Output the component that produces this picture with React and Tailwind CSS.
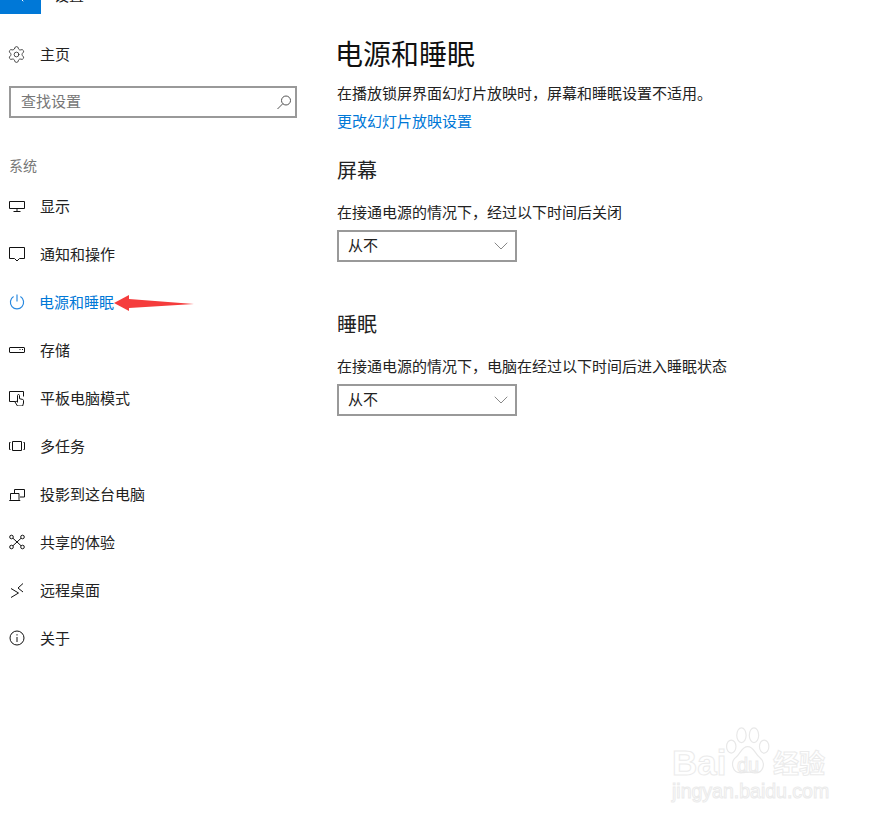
import React from 'react';
import { ChevronLeft, ChevronDown, Settings } from 'lucide-react';

const Icon = ({ children }) => (
  <svg viewBox="0 0 16 16" fill="none" stroke="currentColor" strokeWidth="1" className="w-4 h-4 flex-shrink-0">
    {children}
  </svg>
);

const NAV_ITEMS = [
  {
    label: '显示',
    icon: <path d="M.5 3.500h15v7H.5zM8 10.500V13M4.500 13.500h7" />,
  },
  {
    label: '通知和操作',
    icon: <path d="M.5 1.500h15v11h-5l-2.500 2.500-2.500-2.500h-5z" />,
  },
  {
    label: '电源和睡眠',
    active: true,
    icon: (
      <>
        <path d="M8 .5v7" strokeWidth="1.2" />
        <path d="M4.600 2.600a6.600 6.600 0 1 0 6.800 0" strokeWidth="1.2" />
      </>
    ),
  },
  {
    label: '存储',
    icon: (
      <>
        <rect x=".5" y="5.500" width="15" height="5" rx=".5" />
        <path d="M10.500 7.500h1M13 7.500h1" />
      </>
    ),
  },
  {
    label: '平板电脑模式',
    icon: (
      <>
        <path d="M6 11.500H.5v-10h14v5" />
        <path d="M8.500 16l-2.500-4 1.200-.8 1.300 1V5.500c0-1.300 2-1.300 2 0v3.200l3.300.8c.5.100.7.500.7 1v2.500l-.9 3z" fill="#fff" />
      </>
    ),
  },
  {
    label: '多任务',
    icon: <path d="M3.500 3.500h9v9h-9zM1.500 4.500h-1v7h1M14.500 4.500h1v7h-1" />,
  },
  {
    label: '投影到这台电脑',
    icon: <path d="M5.500 7V3.500h10v7.500H11M.5 14.500l1-1V7.500h8.500v6l1 1z" />,
  },
  {
    label: '共享的体验',
    icon: (
      <>
        <circle cx="2.500" cy="3" r="1.800" />
        <circle cx="13.500" cy="3" r="1.800" />
        <circle cx="2.500" cy="13" r="1.800" />
        <circle cx="13.500" cy="13" r="1.800" />
        <path d="M4 4.300l8 7.400M12 4.300l-8 7.400" />
      </>
    ),
  },
  {
    label: '远程桌面',
    icon: <path d="M2 6.500l7.500 4.500L2 15.500M14 1.500L9 6l5 4" />,
  },
  {
    label: '关于',
    icon: (
      <>
        <circle cx="8" cy="8" r="7" />
        <path d="M8 7v5M8 4.200v1.300" />
      </>
    ),
  },
];

function NavRow({ label, icon, active }) {
  return (
    <div className={`h-12 flex items-center pl-[9px] text-[15px] ${active ? 'text-[#0078d7]' : 'text-[#222]'}`}>
      <span className={active ? 'text-[#2b8ae0]' : 'text-[#111]'}>
        <Icon>{icon}</Icon>
      </span>
      <span className={active ? 'ml-[14px]' : 'ml-[15px]'}>{label}</span>
    </div>
  );
}

function Dropdown() {
  return (
    <div className="mt-[7px] w-[180px] h-8 border-2 border-[#999] flex items-center justify-between pl-[9px] pr-[2px] text-[15px] text-[#222]">
      <span className="-mt-[2px]">从不</span>
      <ChevronDown className="w-6 h-6 text-[#888]" strokeWidth={1} />
    </div>
  );
}

function Watermark() {
  return (
    <div className="absolute left-[672px] top-[726px] w-[160px] h-[85px] select-none whitespace-nowrap">
      <svg viewBox="0 0 60 60" preserveAspectRatio="none" className="absolute left-[53px] top-px w-[47px] h-[49px]" fill="#fff" stroke="#e8e8e8" strokeWidth="1.500">
        <ellipse cx="8" cy="24" rx="6" ry="8" />
        <ellipse cx="21" cy="10" rx="6" ry="9" />
        <ellipse cx="37" cy="10" rx="6" ry="9" />
        <ellipse cx="50" cy="24" rx="6" ry="8" />
        <path d="M29 24c-8 0-9 9-15 13-7 5-6 20 8 19 4 0 10-2 14 0 13 2 17-12 8-19-6-4-7-13-15-13z" />
      </svg>
      <span className="absolute left-0 top-[17px] text-[35px] leading-[40px] font-bold text-white [-webkit-text-stroke:1px_#ebebeb] font-['Liberation_Sans',sans-serif]">Bai</span>
      <span className="absolute left-[65px] top-[27px] text-[20px] leading-[24px] text-white [-webkit-text-stroke:1px_#ebebeb] font-['Liberation_Sans',sans-serif]">du</span>
      <span className="absolute left-[101px] top-[20px] text-[26px] leading-[32px] font-bold text-white [-webkit-text-stroke:1px_#ebebeb]">经验</span>
      <span className="absolute left-0 top-[53px] text-[19.500px] leading-[24px] text-white [-webkit-text-stroke:1px_#ebebeb] font-['Liberation_Sans',sans-serif]">jingyan.baidu.com</span>
    </div>
  );
}

export default function App() {
  return (
    <div className="relative w-[876px] h-[821px] overflow-hidden bg-white font-['Noto_Sans_CJK_SC','Noto_Sans',sans-serif]">
      <div className="h-[14px] flex overflow-hidden">
        <div className="w-[41px] bg-[#0078d7] flex items-end justify-center text-white">
          <ChevronLeft className="w-4 h-4 mb-[9px] flex-shrink-0" strokeWidth={1.500} />
        </div>
        <span className="ml-[13px] -mt-[16px] text-[15px] leading-[22px] text-[#222]">设置</span>
      </div>

      <div className="flex">
        <aside className="w-[337px] flex-shrink-0">
          <div className="mt-4 h-12 flex items-center pl-[7px] text-[15px] text-[#222]">
            <Settings className="w-[19px] h-[19px] flex-shrink-0" strokeWidth={1} />
            <span className="ml-[14px]">主页</span>
          </div>
          <div className="mt-2 ml-[9px] w-[288px] h-8 border-2 border-[#999] flex items-center justify-between pl-[10px] pr-[3px] text-[15px] text-[#777]">
            <span className="-mt-[2px]">查找设置</span>
            <svg viewBox="0 0 16 16" fill="none" stroke="#555" strokeWidth="1" className="w-4 h-4 flex-shrink-0">
              <circle cx="10" cy="6.500" r="4.500" />
              <path d="M6.800 9.700L1.500 15" />
            </svg>
          </div>
          <div className="mt-[35px] h-6 pl-[9px] text-[14px] leading-6 text-[#777]">系统</div>
          <nav className="mt-[5px]">
            {NAV_ITEMS.map(item => (
              <NavRow key={item.label} {...item} />
            ))}
          </nav>
        </aside>

        <main className="pt-[19px] text-[#222]">
          <h1 className="h-10 text-[28px] leading-10 -ml-[2px] text-[#111]">电源和睡眠</h1>
          <p className="mt-[9px] text-[15px] leading-[22px]">在播放锁屏界面幻灯片放映时，屏幕和睡眠设置不适用。</p>
          <p className="mt-[6px] text-[15px] leading-[22px] text-[#0078d7]">更改幻灯片放映设置</p>

          <h2 className="mt-6 text-[20px] leading-7">屏幕</h2>
          <p className="mt-[17px] text-[15px] leading-[22px]">在接通电源的情况下，经过以下时间后关闭</p>
          <Dropdown />

          <h2 className="mt-12 text-[20px] leading-7">睡眠</h2>
          <p className="mt-[17px] text-[15px] leading-[22px]">在接通电源的情况下，电脑在经过以下时间后进入睡眠状态</p>
          <Dropdown />
        </main>
      </div>

      {/* 标注箭头 */}
      <svg viewBox="0 0 84 20" className="absolute left-[112px] top-[293px] w-[84px] h-5">
        <polygon points="2,10 17,2 17,6 82,11 17,15 17,18" fill="#f53c3c" />
      </svg>

      <Watermark />
    </div>
  );
}
